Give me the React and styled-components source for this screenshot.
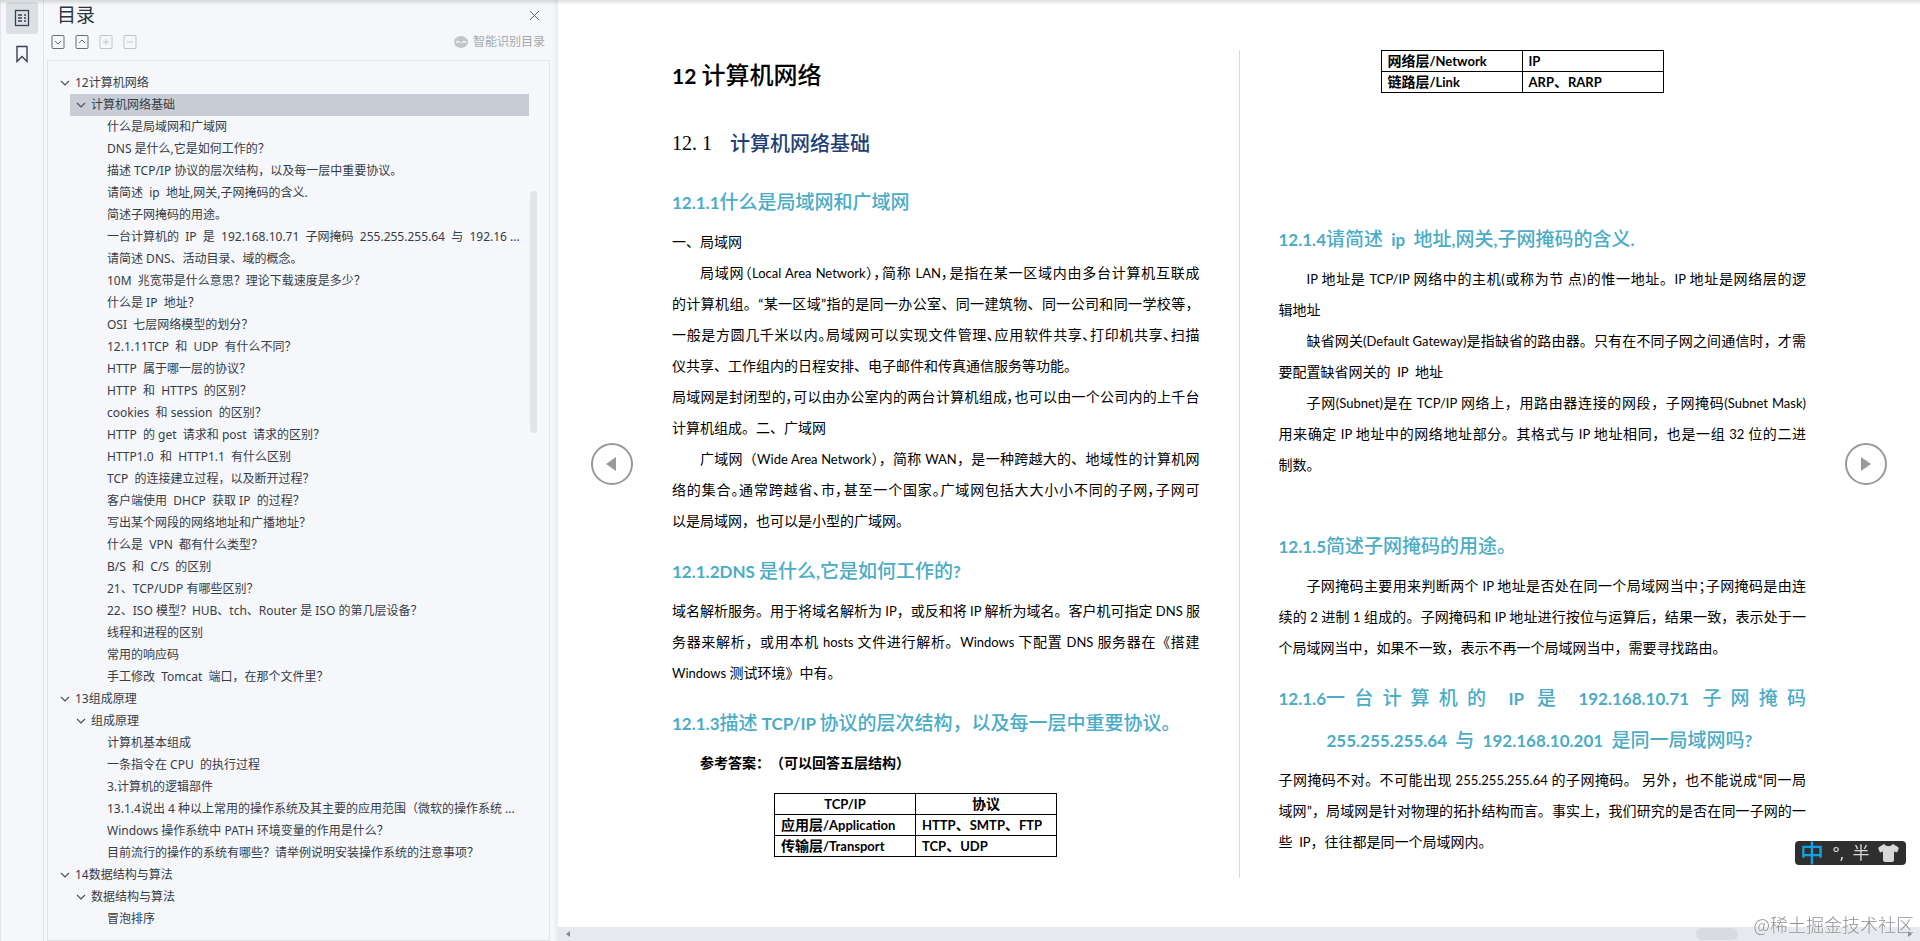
import { useState } from "react";
import styled, { createGlobalStyle } from "styled-components";

const OUTLINE = [
    { level: 0, text: "12计算机网络" },
    { level: 1, text: "计算机网络基础" },
    { level: 2, text: "什么是局域网和广域网" },
    { level: 2, text: "DNS 是什么,它是如何工作的？" },
    { level: 2, text: "描述 TCP/IP 协议的层次结构，以及每一层中重要协议。" },
    { level: 2, text: "请简述  ip  地址,网关,子网掩码的含义." },
    { level: 2, text: "简述子网掩码的用途。" },
    { level: 2, text: "一台计算机的  IP  是  192.168.10.71  子网掩码  255.255.255.64  与  192.16 ..." },
    { level: 2, text: "请简述 DNS、活动目录、域的概念。" },
    { level: 2, text: "10M  兆宽带是什么意思？理论下载速度是多少？" },
    { level: 2, text: "什么是 IP  地址？" },
    { level: 2, text: "OSI  七层网络模型的划分？" },
    { level: 2, text: "12.1.11TCP  和  UDP  有什么不同？" },
    { level: 2, text: "HTTP  属于哪一层的协议？" },
    { level: 2, text: "HTTP  和  HTTPS  的区别？" },
    { level: 2, text: "cookies  和 session  的区别？" },
    { level: 2, text: "HTTP  的 get  请求和 post  请求的区别？" },
    { level: 2, text: "HTTP1.0  和  HTTP1.1  有什么区别" },
    { level: 2, text: "TCP  的连接建立过程，以及断开过程？" },
    { level: 2, text: "客户端使用  DHCP  获取 IP  的过程？" },
    { level: 2, text: "写出某个网段的网络地址和广播地址？" },
    { level: 2, text: "什么是  VPN  都有什么类型？" },
    { level: 2, text: "B/S  和  C/S  的区别" },
    { level: 2, text: "21、TCP/UDP 有哪些区别？" },
    { level: 2, text: "22、ISO 模型？HUB、tch、Router 是 ISO 的第几层设备？" },
    { level: 2, text: "线程和进程的区别" },
    { level: 2, text: "常用的响应码" },
    { level: 2, text: "手工修改  Tomcat  端口，在那个文件里？" },
    { level: 0, text: "13组成原理" },
    { level: 1, text: "组成原理" },
    { level: 2, text: "计算机基本组成" },
    { level: 2, text: "一条指令在 CPU  的执行过程" },
    { level: 2, text: "3.计算机的逻辑部件" },
    { level: 2, text: "13.1.4说出 4 种以上常用的操作系统及其主要的应用范围（微软的操作系统 ..." },
    { level: 2, text: "Windows 操作系统中 PATH 环境变量的作用是什么？" },
    { level: 2, text: "目前流行的操作的系统有哪些？请举例说明安装操作系统的注意事项？" },
    { level: 0, text: "14数据结构与算法" },
    { level: 1, text: "数据结构与算法" },
    { level: 2, text: "冒泡排序" },
];

// Latin runs use a slightly smaller face than the Chinese around them
function Mixed({ children }) {
    return children
        .split(/([\x20-\x7e]+)/)
        .map((part, i) => (i % 2 ? <Latin key={i}>{part}</Latin> : part));
}

function Line({ children, ...props }) {
    return (
        <TextLine {...props}>
            <Mixed>{children}</Mixed>
        </TextLine>
    );
}

function App() {
    const [selected, setSelected] = useState(1);

    return (
        <Reader>
            <GlobalStyle />
            <Rail>
                <RailButton $active aria-label="目录">
                    <svg width="16" height="18" viewBox="0 0 16 18" fill="none" stroke="#39424f" strokeWidth="1.3">
                        <rect x="1.5" y="1.5" width="13" height="15" />
                        <path d="M4 6h4M4 9h4M4 12h4M10 6h2M10 9h2M10 12h2" />
                    </svg>
                </RailButton>
                <RailButton aria-label="书签">
                    <svg width="14" height="18" viewBox="0 0 14 18" fill="none" stroke="#39424f" strokeWidth="1.4">
                        <path d="M2 1.5h10v15L7 11.5l-5 5z" />
                    </svg>
                </RailButton>
            </Rail>

            <Panel>
                <PanelHead>
                    <PanelTitle>目录</PanelTitle>
                    <IconButton aria-label="关闭">
                        <svg width="11" height="11" viewBox="0 0 11 11" stroke="#666c74">
                            <path d="M1 1l9 9M10 1l-9 9" />
                        </svg>
                    </IconButton>
                </PanelHead>
                <Tools>
                    <ToolButton aria-label="展开">
                        <ToolIcon d="M4 6l3 3 3-3" />
                    </ToolButton>
                    <ToolButton aria-label="收起">
                        <ToolIcon d="M4 8l3-3 3 3" />
                    </ToolButton>
                    <ToolButton $muted aria-label="添加">
                        <ToolIcon d="M4 7h6M7 4v6" />
                    </ToolButton>
                    <ToolButton $muted aria-label="删除">
                        <ToolIcon d="M4 7h6" />
                    </ToolButton>
                    <SmartButton>
                        <svg width="14" height="12" viewBox="0 0 14 12">
                            <ellipse cx="7" cy="6" rx="7" ry="6" fill="#c3c6c9" />
                            <path d="M2 7q2-3 4 0M8 7q2-3 4 0" fill="none" stroke="#f5f7fa" strokeWidth="1.3" />
                        </svg>
                        智能识别目录
                    </SmartButton>
                </Tools>
                <TreeBox>
                    <Tree>
                        {OUTLINE.map((item, i) => (
                            <li key={i}>
                                <TreeRow $level={item.level} $selected={i === selected} onClick={() => setSelected(i)}>
                                    {item.level < 2 && (
                                        <svg width="10" height="6" viewBox="0 0 10 6" fill="none" stroke="#4a515c" strokeWidth="1.2">
                                            <path d="M1 1l4 4 4-4" />
                                        </svg>
                                    )}
                                    <span>{item.text}</span>
                                </TreeRow>
                            </li>
                        ))}
                    </Tree>
                    <TreeThumb />
                </TreeBox>
            </Panel>

            <Viewer>
                <Spread>
                    <PageButton aria-label="上一页">
                        <svg width="12" height="14" viewBox="0 0 12 14" fill="#999">
                            <path d="M10 0v14L0 7z" />
                        </svg>
                    </PageButton>

                    <Page>
                        <ChapterTitle>
                            <Mixed>12 计算机网络</Mixed>
                        </ChapterTitle>
                        <SectionTitle>
                            <SectionNumber>12. 1</SectionNumber>
                            计算机网络基础
                        </SectionTitle>

                        <Question><Mixed>12.1.1什么是局域网和广域网</Mixed></Question>
                        <Line>一、局域网</Line>
                        <Line $full $tight $indent>局域网（Local Area Network），简称  LAN，是指在某一区域内由多台计算机互联成</Line>
                        <Line $full>的计算机组。“某一区域”指的是同一办公室、同一建筑物、同一公司和同一学校等，</Line>
                        <Line $full $tight>一般是方圆几千米以内。局域网可以实现文件管理、应用软件共享、打印机共享、扫描</Line>
                        <Line>仪共享、工作组内的日程安排、电子邮件和传真通信服务等功能。</Line>
                        <Line $full $tight>局域网是封闭型的，可以由办公室内的两台计算机组成，也可以由一个公司内的上千台</Line>
                        <Line>计算机组成。二、广域网</Line>
                        <Line $full $indent>广域网（Wide Area Network），简称  WAN，是一种跨越大的、地域性的计算机网</Line>
                        <Line $full $tight>络的集合。通常跨越省、市，甚至一个国家。广域网包括大大小小不同的子网，子网可</Line>
                        <Line>以是局域网，也可以是小型的广域网。</Line>

                        <Question><Mixed>12.1.2DNS 是什么,它是如何工作的?</Mixed></Question>
                        <Line $full>域名解析服务。用于将域名解析为 IP，或反和将 IP 解析为域名。客户机可指定 DNS 服</Line>
                        <Line $full>务器来解析，或用本机 hosts 文件进行解析。Windows 下配置 DNS 服务器在《搭建</Line>
                        <Line>Windows 测试环境》中有。</Line>

                        <Question><Mixed>12.1.3描述 TCP/IP 协议的层次结构，以及每一层中重要协议。</Mixed></Question>
                        <Line $indent $bold>参考答案：（可以回答五层结构）</Line>
                        <LayerTable $gap={15}>
                            <thead>
                                <tr>
                                    <th><Mixed>TCP/IP</Mixed></th>
                                    <th>协议</th>
                                </tr>
                            </thead>
                            <tbody>
                                <tr>
                                    <td><Mixed>应用层/Application</Mixed></td>
                                    <td><Mixed>HTTP、SMTP、FTP</Mixed></td>
                                </tr>
                                <tr>
                                    <td><Mixed>传输层/Transport</Mixed></td>
                                    <td><Mixed>TCP、UDP</Mixed></td>
                                </tr>
                            </tbody>
                        </LayerTable>
                    </Page>

                    <Divider />

                    <Page>
                        <LayerTable>
                            <tbody>
                                <tr>
                                    <td><Mixed>网络层/Network</Mixed></td>
                                    <td><Mixed>IP</Mixed></td>
                                </tr>
                                <tr>
                                    <td><Mixed>链路层/Link</Mixed></td>
                                    <td><Mixed>ARP、RARP</Mixed></td>
                                </tr>
                            </tbody>
                        </LayerTable>

                        <Question $gap={125}><Mixed>12.1.4请简述  ip  地址,网关,子网掩码的含义.</Mixed></Question>
                        <Line $full $indent>IP 地址是  TCP/IP 网络中的主机(或称为节 点)的惟一地址。IP 地址是网络层的逻</Line>
                        <Line>辑地址</Line>
                        <Line $full $indent>缺省网关(Default Gateway)是指缺省的路由器。只有在不同子网之间通信时，才需</Line>
                        <Line>要配置缺省网关的  IP  地址</Line>
                        <Line $full $indent>子网(Subnet)是在  TCP/IP 网络上，用路由器连接的网段，子网掩码(Subnet Mask)</Line>
                        <Line $full>用来确定  IP  地址中的网络地址部分。其格式与  IP 地址相同，也是一组  32  位的二进</Line>
                        <Line>制数。</Line>

                        <Question $gap={45}><Mixed>12.1.5简述子网掩码的用途。</Mixed></Question>
                        <Line $full $tight $indent>子网掩码主要用来判断两个 IP 地址是否处在同一个局域网当中；子网掩码是由连</Line>
                        <Line $full>续的 2 进制 1 组成的。子网掩码和 IP 地址进行按位与运算后，结果一致，表示处于一</Line>
                        <Line>个局域网当中，如果不一致，表示不再一个局域网当中，需要寻找路由。</Line>

                        <Question>
                            <Spaced>
                                <Mixed>12.1.6</Mixed>
                                <SpacedText><Mixed>一台计算机的 IP 是 192.168.10.71 子网掩码</Mixed></SpacedText>
                            </Spaced>
                            <Hanging><Mixed>255.255.255.64  与  192.168.10.201  是同一局域网吗?</Mixed></Hanging>
                        </Question>
                        <Line $full>子网掩码不对。不可能出现  255.255.255.64  的子网掩码。 另外，也不能说成“同一局</Line>
                        <Line $full>域网”，局域网是针对物理的拓扑结构而言。事实上，我们研究的是否在同一子网的一</Line>
                        <Line>些  IP，往往都是同一个局域网内。</Line>
                    </Page>

                    <PageButton aria-label="下一页">
                        <svg width="10" height="14" viewBox="0 0 10 14" fill="#999">
                            <path d="M0 0v14l10-7z" />
                        </svg>
                    </PageButton>
                </Spread>
                <ScrollBar>
                    <ScrollArrow width="4" height="6" viewBox="0 0 4 6">
                        <path d="M4 0v6L0 3z" />
                    </ScrollArrow>
                    <ScrollThumb />
                    <ScrollArrow width="4" height="6" viewBox="0 0 4 6">
                        <path d="M0 0v6l4-3z" />
                    </ScrollArrow>
                </ScrollBar>
            </Viewer>

            <TopShade />
            <InputBar>
                <InputMode>中</InputMode>
                <span>°,</span>
                <span>半</span>
                <svg width="21" height="18" viewBox="0 0 21 18" fill="#d8d8d8">
                    <path d="M6 0q4.500 4.500 9 0l5.200 3.200Q21 4 20.600 5L19 8.500l-3-1V16q0 2-2 2H7q-2 0-2-2V7.500l-3 1L.4 5Q0 4 .8 3.200z" />
                </svg>
            </InputBar>
            <Watermark>@稀土掘金技术社区</Watermark>
        </Reader>
    );
}

function ToolIcon({ d }) {
    return (
        <svg width="14" height="14" viewBox="0 0 14 14" fill="none" stroke="currentColor">
            <rect x="1" y="0.5" width="12" height="13" rx="1" />
            <path d={d} />
        </svg>
    );
}

const GlobalStyle = createGlobalStyle`
    * {
        box-sizing: border-box;
    }

    body {
        margin: 0;
        background: #fff;
        font-family: "Noto Sans", "Noto Sans CJK SC", sans-serif;
    }

    button {
        padding: 0;
        border: none;
        background: none;
        font: inherit;
        color: inherit;
    }
`;

const Reader = styled.div`
    display: flex;
    height: 100vh;
    overflow: hidden;
`;

const Rail = styled.nav`
    display: flex;
    flex-direction: column;
    align-items: center;
    gap: 4px;
    width: 44px;
    padding-top: 2px;
    background: #f5f7fa;
    border-left: 1px solid #e4e6e9;
    border-right: 1px solid #e0e3e6;
`;

const RailButton = styled.button`
    display: flex;
    align-items: center;
    justify-content: center;
    width: 32px;
    height: 32px;
    border-radius: 3px;
    background: ${({ $active }) => ($active ? "#dbe0e5" : "none")};
`;

const Panel = styled.aside`
    display: flex;
    flex-direction: column;
    flex-shrink: 0;
    width: 514px;
    padding: 0 5px 0 3px;
    background: #f5f7fa;
    border-right: 3px solid #eceef1;
`;

const PanelHead = styled.header`
    display: flex;
    align-items: center;
    justify-content: space-between;
    height: 30px;
    padding: 0 8px 0 10px;
`;

const PanelTitle = styled.h2`
    margin: 0;
    font-size: 19px;
    font-weight: 400;
    line-height: 30px;
    color: #2b3340;
`;

const IconButton = styled.button`
    display: flex;
    align-items: center;
    justify-content: center;
    width: 16px;
    height: 16px;
`;

const Tools = styled.div`
    display: flex;
    align-items: center;
    gap: 10px;
    height: 30px;
    padding: 0 5px 6px 4px;
`;

const ToolButton = styled.button`
    display: flex;
    width: 14px;
    height: 14px;
    color: ${({ $muted }) => ($muted ? "#bfc3c8" : "#676e78")};
`;

const SmartButton = styled.button`
    display: flex;
    align-items: center;
    gap: 5px;
    margin-left: auto;
    font-size: 12px;
    line-height: 18px;
    color: #a5a8ac;
`;

const TreeBox = styled.div`
    position: relative;
    flex: 1;
    min-height: 0;
    padding: 11px 20px 0 12px;
    border: 1px solid #e2e5e8;
`;

const Tree = styled.ul`
    margin: 0;
    padding: 0;
    list-style: none;

    li {
        display: flex;
    }
`;

const TreeRow = styled.button`
    display: flex;
    flex: 1;
    align-items: center;
    gap: 5px;
    height: 22px;
    margin-left: ${({ $level }) => ($level > 0 ? 10 : 0)}px;
    padding-left: ${({ $level }) => [0, 6, 37][$level]}px;
    background: ${({ $selected }) => ($selected ? "#c8cdd5" : "none")};
    font-size: 12px;
    line-height: 22px;
    text-align: left;
    white-space: pre;
    color: #363c47;
`;

const TreeThumb = styled.div`
    position: absolute;
    top: 130px;
    right: 12px;
    width: 7px;
    height: 242px;
    border-radius: 4px;
    background: #e2e4e6;
`;

const Viewer = styled.main`
    display: flex;
    flex-direction: column;
    flex: 1;
    min-width: 0;
    background: #fff;
`;

const Spread = styled.div`
    display: flex;
    flex: 1;
    gap: 39px;
    min-height: 0;
    padding: 0 33px;
`;

const PageButton = styled.button`
    display: flex;
    flex-shrink: 0;
    align-items: center;
    justify-content: center;
    align-self: center;
    width: 42px;
    height: 42px;
    border: 2px solid #9a9a9a;
    border-radius: 50%;
`;

const Page = styled.article`
    flex: 1;
    min-width: 0;
    padding-top: 50px;
    font-family: Lato, "Noto Sans CJK SC", sans-serif;
    font-size: 14px;
    color: #000;
`;

const Divider = styled.div`
    width: 1px;
    margin: 50px 0 49px;
    background: #d9d9d9;
`;

const Latin = styled.span`
    font-size: 13px;
    line-height: 1;
`;

const ChapterTitle = styled.h1`
    margin: 7px 0 35px;
    font-size: 24px;
    font-weight: 500;
    line-height: 36px;

    ${Latin} {
        font-size: 21px;
        font-weight: 700;
    }
`;

const SectionTitle = styled.h2`
    display: flex;
    gap: 18px;
    margin: 0 0 22px;
    font-size: 20px;
    font-weight: 500;
    line-height: 31px;
    color: #1f3f77;
`;

const SectionNumber = styled.span`
    font-family: "Liberation Serif", serif;
    font-weight: 400;
    color: #000;
`;

const Question = styled.h3`
    margin: ${({ $gap = 14 }) => $gap}px 0 4px;
    font-size: 19px;
    font-weight: 500;
    line-height: 41px;
    white-space: pre;
    color: #4bacc6;

    ${SectionTitle} + & {
        margin-top: 0;
    }

    ${Latin} {
        font-size: 17px;
        font-weight: 700;
    }
`;

const Spaced = styled.div`
    display: flex;
    align-items: baseline;
    white-space: nowrap;

    > ${Latin} {
        line-height: inherit;
    }
`;

const SpacedText = styled.span`
    flex: 1;
    text-align-last: justify;
`;

const Hanging = styled.div`
    padding-left: 48px;
`;

const TextLine = styled.p`
    margin: 0;
    padding-left: ${({ $indent }) => ($indent ? 28 : 0)}px;
    font-weight: ${({ $bold }) => ($bold ? 700 : 400)};
    font-feature-settings: ${({ $tight }) => ($tight ? '"palt"' : "normal")};
    line-height: 31px;
    white-space: ${({ $full }) => ($full ? "nowrap" : "pre")};
    text-align-last: ${({ $full }) => ($full ? "justify" : "left")};
    text-spacing-trim: ${({ $full }) => ($full ? "normal" : "space-all")};
`;

const LayerTable = styled.table`
    width: 283px;
    margin: ${({ $gap = 0 }) => $gap}px 0 0 102px;
    border-collapse: collapse;
    table-layout: fixed;
    font-weight: 700;

    th,
    td {
        height: 21px;
        padding: 0 6px;
        border: 1px solid #000;
        line-height: 20px;
        text-align: left;
    }

    th {
        text-align: center;
    }
`;

const ScrollBar = styled.div`
    display: flex;
    align-items: center;
    height: 14px;
    padding: 0 8px;
    background: #e8e9ee;
`;

const ScrollArrow = styled.svg`
    fill: #85888f;
`;

const ScrollThumb = styled.div`
    width: 42px;
    height: 12px;
    margin: 0 170px 0 auto;
    border-radius: 6px;
    background: #d8dbe4;
`;

const TopShade = styled.div`
    position: fixed;
    top: 0;
    left: 0;
    right: 0;
    height: 5px;
    background: linear-gradient(rgba(0, 0, 0, 0.13), rgba(0, 0, 0, 0));
    pointer-events: none;
`;

const InputBar = styled.div`
    position: fixed;
    right: 14px;
    bottom: 76px;
    display: flex;
    align-items: center;
    justify-content: space-between;
    width: 111px;
    height: 24px;
    padding: 0 7px 0 5px;
    border-radius: 4px;
    background: #2f2f2f;
    font-size: 17px;
    line-height: 24px;
    color: #d8d8d8;
`;

const InputMode = styled.span`
    font-size: 24px;
    font-weight: 500;
    color: #149fe0;
`;

const Watermark = styled.div`
    position: fixed;
    right: 6px;
    bottom: 4px;
    font-family: "Noto Sans CJK SC", sans-serif;
    font-size: 18px;
    font-weight: 300;
    line-height: 26px;
    color: #8d8f93;
    text-shadow: 0 0 1px #fff;
`;

export default App;
